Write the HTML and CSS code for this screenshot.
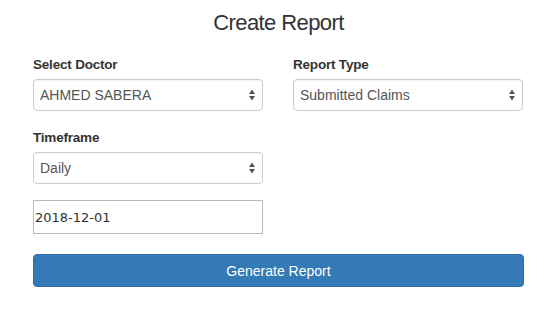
FILE: index.html
```html
<!DOCTYPE html>
<html lang="en">
<head>
  <meta charset="UTF-8" />
  <title>Create Report</title>
  <link rel="stylesheet" href="styles.css">
</head>
<body>
  <div class="container">
    <h3 class="title">Create Report</h3>

    <div class="row">
      <div class="col">
        <label class="field-label">Select Doctor</label>
        <div class="select-box">
          <span>AHMED SABERA</span>
          <svg class="arrows" width="6" height="12" viewBox="0 0 6 12">
            <path d="M3 0.5 L6 5 L0 5 Z" fill="#555"/>
            <path d="M3 11.5 L6 7 L0 7 Z" fill="#555"/>
          </svg>
        </div>
      </div>
      <div class="col">
        <label class="field-label">Report Type</label>
        <div class="select-box">
          <span>Submitted Claims</span>
          <svg class="arrows" width="6" height="12" viewBox="0 0 6 12">
            <path d="M3 0.5 L6 5 L0 5 Z" fill="#555"/>
            <path d="M3 11.5 L6 7 L0 7 Z" fill="#555"/>
          </svg>
        </div>
      </div>
    </div>

    <div class="row second">
      <div class="col">
        <label class="field-label">Timeframe</label>
        <div class="select-box">
          <span>Daily</span>
          <svg class="arrows" width="6" height="12" viewBox="0 0 6 12">
            <path d="M3 0.5 L6 5 L0 5 Z" fill="#555"/>
            <path d="M3 11.5 L6 7 L0 7 Z" fill="#555"/>
          </svg>
        </div>
        <div class="date-box">2018-12-01</div>
      </div>
      <div class="col"></div>
    </div>

    <button class="btn-primary">Generate Report</button>
  </div>
</body>
</html>
```

FILE: styles.css
```css
body {
  margin: 0;
  padding: 0;
  background: #ffffff;
  font-family: "Liberation Sans", Arial, sans-serif;
  color: #333333;
}
.container {
  width: 491px;
  padding: 0 0 0 33px;
}
.title {
  margin: 11px 0 0 0;
  font-size: 22px;
  font-weight: normal;
  letter-spacing: -0.6px;
  text-align: center;
  line-height: 24px;
}
.row {
  display: flex;
  gap: 30px;
}
.col {
  width: 230px;
}
.field-label {
  display: block;
  font-size: 13.5px;
  font-weight: bold;
  letter-spacing: -0.2px;
  margin-top: 21px;
  margin-bottom: 6px;
  line-height: 17px;
}
.second .field-label {
  margin-top: 18px;
}
.select-box {
  height: 30px;
  border: 1px solid #cccccc;
  border-radius: 4px;
  display: flex;
  align-items: center;
  justify-content: space-between;
  padding: 0 7px 0 6px;
  font-size: 14px;
  color: #555555;
  box-shadow: inset 0 1px 1px rgba(0,0,0,0.04);
}
.arrows {
  display: block;
}
.date-box {
  margin-top: 16px;
  height: 32px;
  border: 1px solid #b9b9b9;
  display: flex;
  align-items: center;
  padding: 0 1px;
  font-family: "DejaVu Sans", sans-serif;
  font-size: 13px;
  color: #333333;
}
.btn-primary {
  display: block;
  margin-top: 20px;
  width: 491px;
  height: 33px;
  border: 1px solid #2e6da4;
  border-radius: 4px;
  background-color: #337ab7;
  color: #ffffff;
  font-family: "Liberation Sans", Arial, sans-serif;
  font-size: 14px;
}
```
